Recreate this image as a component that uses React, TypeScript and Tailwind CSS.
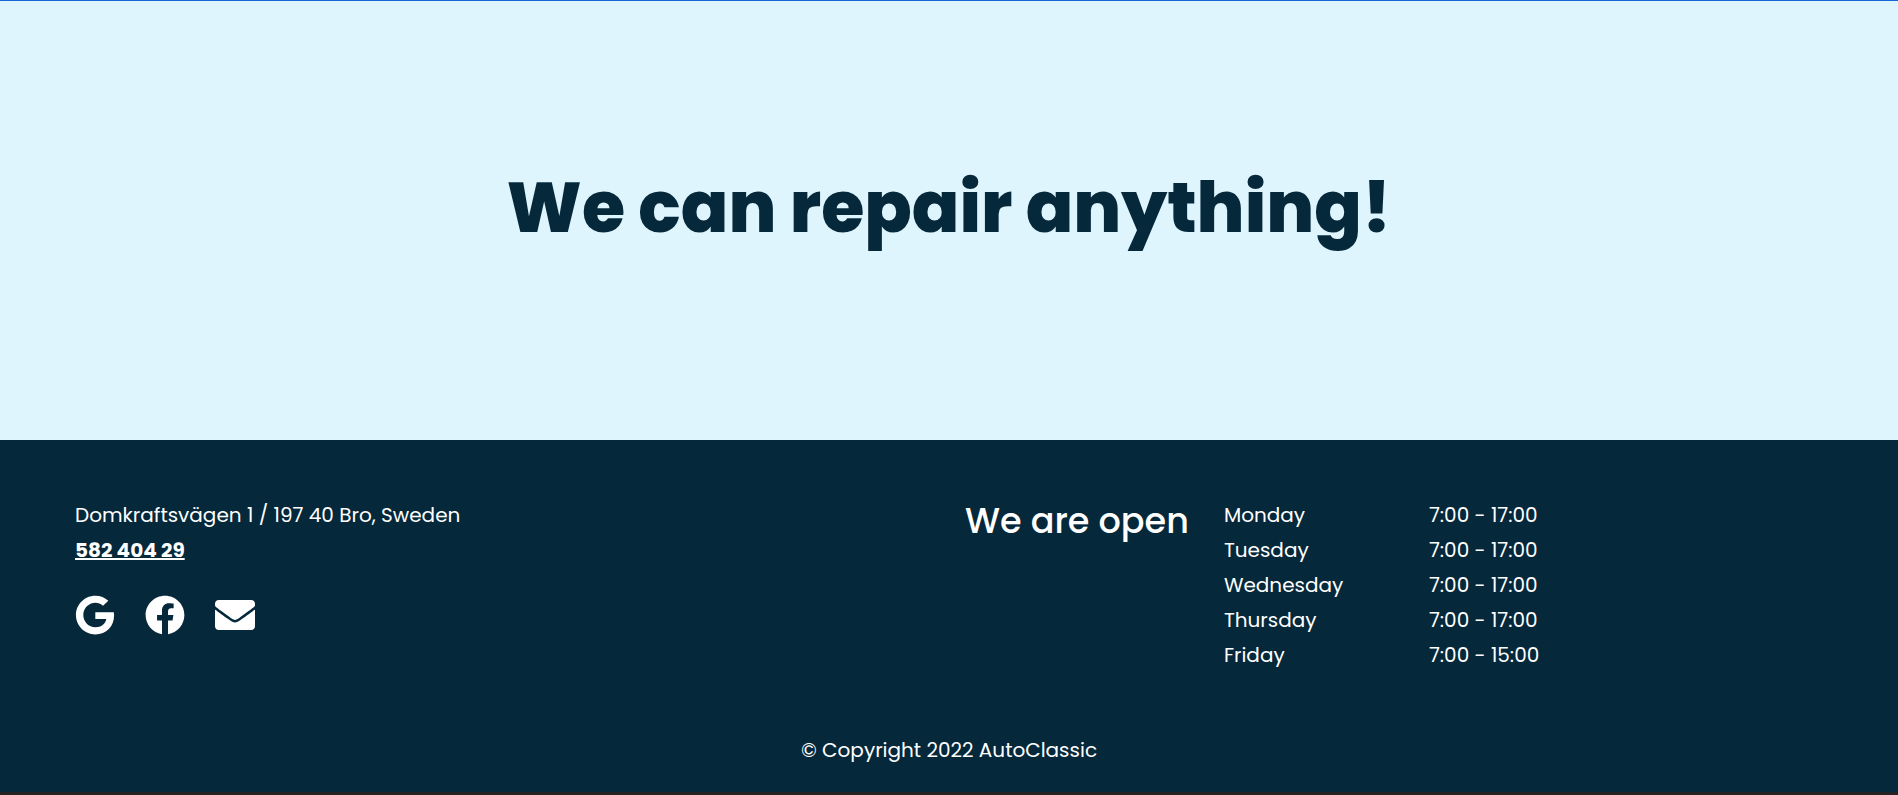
import { FaEnvelope, FaFacebook, FaGoogle } from "react-icons/fa";

const hours = [
  { day: "Monday", time: "7:00 - 17:00" },
  { day: "Tuesday", time: "7:00 - 17:00" },
  { day: "Wednesday", time: "7:00 - 17:00" },
  { day: "Thursday", time: "7:00 - 17:00" },
  { day: "Friday", time: "7:00 - 15:00" },
];

const links = [
  { label: "Google", href: "#google", Icon: FaGoogle },
  { label: "Facebook", href: "#facebook", Icon: FaFacebook },
  { label: "Email", href: "#email", Icon: FaEnvelope },
];

export default function App() {
  return (
    <div className="flex min-h-screen flex-col border-t border-[#1565d8] bg-[#05283b] font-[Poppins,Inter,sans-serif]">
      <main className="bg-[#def5fe] px-6 pt-[152px] pb-[177px] text-center">
        <h1 className="text-[70px] leading-[110px] font-extrabold text-[#05283b]">
          We can repair anything!
        </h1>
      </main>

      <footer className="flex flex-1 flex-col border-b-[3px] border-[#242222] text-[20px] leading-[35px] text-white">
        <div className="grid grid-cols-1 gap-y-8 px-[75px] pt-[58px] lg:grid-cols-2 lg:gap-x-8">
          <address className="not-italic">
            <p>Domkraftsvägen 1 / 197 40 Bro, Sweden</p>
            <a href="tel:58240429" className="font-bold underline decoration-2">
              582 404 29
            </a>
            <div className="mt-[27px] flex gap-[30px]">
              {links.map(({ label, href, Icon }) => (
                <a key={label} href={href} aria-label={label}>
                  <Icon className="size-[40px]" />
                </a>
              ))}
            </div>
          </address>

          <section className="flex flex-wrap items-start gap-[35px]">
            <h2 className="pt-[2px] text-[35px] leading-[42px] font-medium">We are open</h2>
            <table aria-label="Opening hours">
              <tbody>
                {hours.map(({ day, time }) => (
                  <tr key={day}>
                    <th scope="row" className="w-[205px] p-0 text-left font-normal">
                      {day}
                    </th>
                    <td className="p-0">{time}</td>
                  </tr>
                ))}
              </tbody>
            </table>
          </section>
        </div>
        <p className="pt-[60px] pb-[24px] text-center">© Copyright 2022 AutoClassic</p>
      </footer>
    </div>
  );
}
